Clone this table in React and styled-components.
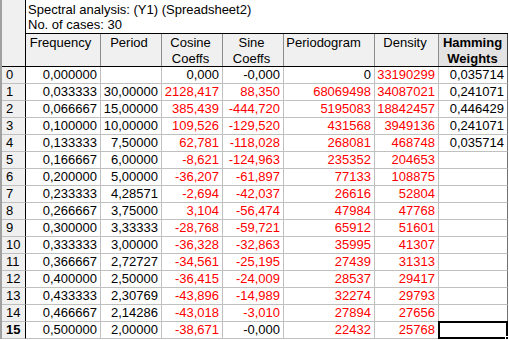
import styled, { createGlobalStyle } from "styled-components";

const GlobalStyle = createGlobalStyle`
    html, body {
        margin: 0;
        padding: 0;
        background: #ffffff;
    }
    body {
        font-family: "Liberation Sans", Arial, sans-serif;
        font-size: 13px;
        color: #000000;
    }
`;

// widths include the 1px right border of each column
const columns = [
    { key: "freq", title: ["Frequency"], width: 75, shift: 5 },
    { key: "period", title: ["Period"], width: 61, shift: 4 },
    { key: "cos", title: ["Cosine", "Coeffs"], width: 61, shift: 3 },
    { key: "sin", title: ["Sine", "Coeffs"], width: 61, shift: 3 },
    { key: "pgram", title: ["Periodogram"], width: 91, shift: 11 },
    { key: "dens", title: ["Density"], width: 64, shift: 3 },
    { key: "hamm", title: ["Hamming", "Weights"], width: 69, shift: 1, active: true },
];

// "!" prefix = plain black value, otherwise red in the coloured columns
const rows = [
    ["0,000000", "", "!0,000", "!-0,000", "!0", "33190299", "0,035714"],
    ["0,033333", "30,00000", "2128,417", "88,350", "68069498", "34087021", "0,241071"],
    ["0,066667", "15,00000", "385,439", "-444,720", "5195083", "18842457", "0,446429"],
    ["0,100000", "10,00000", "109,526", "-129,520", "431568", "3949136", "0,241071"],
    ["0,133333", "7,50000", "62,781", "-118,028", "268081", "468748", "0,035714"],
    ["0,166667", "6,00000", "-8,621", "-124,963", "235352", "204653", ""],
    ["0,200000", "5,00000", "-36,207", "-61,897", "77133", "108875", ""],
    ["0,233333", "4,28571", "-2,694", "-42,037", "26616", "52804", ""],
    ["0,266667", "3,75000", "3,104", "-56,474", "47984", "47768", ""],
    ["0,300000", "3,33333", "-28,768", "-59,721", "65912", "51601", ""],
    ["0,333333", "3,00000", "-36,328", "-32,863", "35995", "41307", ""],
    ["0,366667", "2,72727", "-34,561", "-25,195", "27439", "31313", ""],
    ["0,400000", "2,50000", "-36,415", "-24,009", "28537", "29417", ""],
    ["0,433333", "2,30769", "-43,896", "-14,989", "32274", "29793", ""],
    ["0,466667", "2,14286", "-43,018", "-3,010", "27894", "27656", ""],
    ["0,500000", "2,00000", "-38,671", "!-0,000", "22432", "25768", ""],
];

const redCols = [2, 3, 4, 5];
const activeRow = 15;
const activeCol = 6;

const App = () => {
    return (
        <>
            <GlobalStyle />
            <Sheet>
                <Top>
                    <Corner />
                    <TopRight>
                        <Title>
                            <div>Spectral analysis: (Y1) (Spreadsheet2)</div>
                            <div>No. of cases: 30</div>
                        </Title>
                        <HeaderRow>
                            {columns.map((c) => (
                                <HeadCell
                                    key={c.key}
                                    $w={c.width}
                                    $shift={c.shift}
                                    $active={c.active}
                                >
                                    {c.title.map((t) => (
                                        <div key={t}>{t}</div>
                                    ))}
                                </HeadCell>
                            ))}
                        </HeaderRow>
                    </TopRight>
                </Top>

                {rows.map((r, i) => (
                    <Row key={i}>
                        <RowHead $active={i === activeRow}>{i}</RowHead>
                        {r.map((v, j) => {
                            const plain = v.startsWith("!");
                            return (
                                <Cell
                                    key={j}
                                    $w={columns[j].width}
                                    $red={!plain && redCols.includes(j)}
                                    $selected={i === activeRow && j === activeCol}
                                >
                                    {plain ? v.slice(1) : v}
                                </Cell>
                            );
                        })}
                    </Row>
                ))}
            </Sheet>
        </>
    );
};

const Sheet = styled.div`
    width: 508px;
    display: flex;
    flex-direction: column;
    border-left: 2px solid #a0a0a0;
    box-sizing: border-box;
    overflow: hidden;
`;

const Top = styled.div`
    display: flex;
    border-bottom: 1px solid #000000;
`;

const Corner = styled.div`
    width: 24px;
    flex: none;
    box-sizing: border-box;
    background: #f0f0f0;
    border-right: 1px solid #000000;
`;

const TopRight = styled.div`
    display: flex;
    flex-direction: column;
    flex: 1;
`;

const Title = styled.div`
    height: 34px;
    box-sizing: border-box;
    padding: 2px 0 0 2px;
    line-height: 15px;
    background: #ffffff;
    border-bottom: 1px solid #000000;
    white-space: nowrap;
`;

const HeaderRow = styled.div`
    display: flex;
    height: 32px;
`;

const HeadCell = styled.div`
    width: ${(p) => p.$w}px;
    flex: none;
    box-sizing: border-box;
    padding: 1px ${(p) => p.$shift}px 0 0;
    line-height: 16px;
    text-align: center;
    white-space: nowrap;
    background: ${(p) => (p.$active ? "#e3e3e3" : "#f0f0f0")};
    font-weight: ${(p) => (p.$active ? "bold" : "normal")};
    border-right: 1px solid ${(p) => (p.$active ? "#404040" : "#8c8c8c")};
`;

const Row = styled.div`
    display: flex;
    height: 17px;
`;

const RowHead = styled.div`
    width: 24px;
    flex: none;
    box-sizing: border-box;
    padding-left: 4px;
    line-height: 16px;
    background: #f0f0f0;
    border-right: 1px solid #000000;
    border-bottom: 1px solid #c0c0c0;
    font-weight: ${(p) => (p.$active ? "bold" : "normal")};
`;

const Cell = styled.div`
    position: relative;
    width: ${(p) => p.$w}px;
    flex: none;
    box-sizing: border-box;
    padding-right: 3px;
    line-height: 16px;
    text-align: right;
    white-space: nowrap;
    color: ${(p) => (p.$red ? "#ff0000" : "#000000")};
    background: #ffffff;
    border-right: 1px solid #c0c0c0;
    border-bottom: 1px solid #c0c0c0;

    &:last-child {
        border-right-color: #707070;
    }

    ${(p) =>
        p.$selected &&
        `
        &::after {
            content: "";
            position: absolute;
            left: -1px;
            top: -1px;
            right: -1px;
            bottom: -1px;
            border: 2px solid #000000;
        }
        &::before {
            content: "";
            position: absolute;
            right: -2px;
            bottom: -2px;
            width: 3px;
            height: 3px;
            background: #000000;
            border-left: 1px solid #ffffff;
            border-top: 1px solid #ffffff;
            z-index: 1;
        }
    `}
`;

export default App;
